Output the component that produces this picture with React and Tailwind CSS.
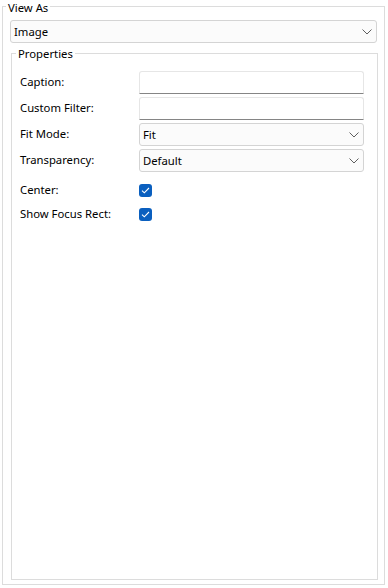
import React from 'react'

const font = { fontFamily: '"Noto Sans", "Open Sans", sans-serif' }

function Chevron() {
  return (
    <svg width="10" height="6" viewBox="0 0 10 6" className="shrink-0">
      <path d="M0.5 0.5 L5 5 L9.5 0.5" fill="none" stroke="#5f5f5f" strokeWidth="1" />
    </svg>
  )
}

function Combo({ value, className = '' }) {
  return (
    <div className={`flex items-center justify-between h-[23px] rounded-[3px] border border-[#d4d4d4] bg-[#fbfbfb] pl-[3px] pr-[4px] ${className}`}>
      <span className="text-[11.3px] leading-none text-black">{value}</span>
      <Chevron />
    </div>
  )
}

function TextBox() {
  return (
    <div className="h-[23px] w-[225px] rounded-t-[3px] border border-[#e6e6e6] border-b-[#858585] bg-white" />
  )
}

function Check() {
  return (
    <div className="flex h-[13px] w-[13px] items-center justify-center rounded-[3px] bg-[#0a5fbf]">
      <svg width="9" height="7" viewBox="0 0 9 7">
        <path d="M1 3.6 L3.3 5.8 L8 1" fill="none" stroke="white" strokeWidth="1.1" />
      </svg>
    </div>
  )
}

const fields = [
  { label: 'Caption:', kind: 'text' },
  { label: 'Custom Filter:', kind: 'text' },
  { label: 'Fit Mode:', kind: 'combo', value: 'Fit' },
  { label: 'Transparency:', kind: 'combo', value: 'Default' },
]

export default function App() {
  return (
    <div className="h-[588px] w-[388px] overflow-hidden bg-white text-[11.3px] text-black" style={font}>
      <fieldset className="ml-[2px] mt-[-1px] h-[586px] w-[383px] border border-[#dcdcdc] p-0">
        <legend className="ml-[3px] px-[2px] pt-[2px] text-[11.3px] leading-[13px]">View As</legend>
        <Combo value="Image" className="ml-[7px] mt-[6px] w-[367px]" />

        <fieldset className="ml-[8px] mt-[4px] h-[533px] w-[367px] border border-[#dcdcdc] p-0">
          <legend className="ml-[4px] px-[2px] text-[11.3px] leading-[13px]">Properties</legend>
          <div className="mt-[11px] flex flex-col gap-[3px] pl-[8px]">
            {fields.map((f) => (
              <div key={f.label} className="flex items-center">
                <span className="w-[119px] shrink-0">{f.label}</span>
                {f.kind === 'text' ? <TextBox /> : <Combo value={f.value} className="w-[225px]" />}
              </div>
            ))}
          </div>
          <div className="mt-[6px] flex flex-col pl-[8px]">
            {['Center:', 'Show Focus Rect:'].map((l) => (
              <div key={l} className="flex h-[24px] items-center">
                <span className="w-[119px] shrink-0">{l}</span>
                <Check />
              </div>
            ))}
          </div>
        </fieldset>
      </fieldset>
    </div>
  )
}
